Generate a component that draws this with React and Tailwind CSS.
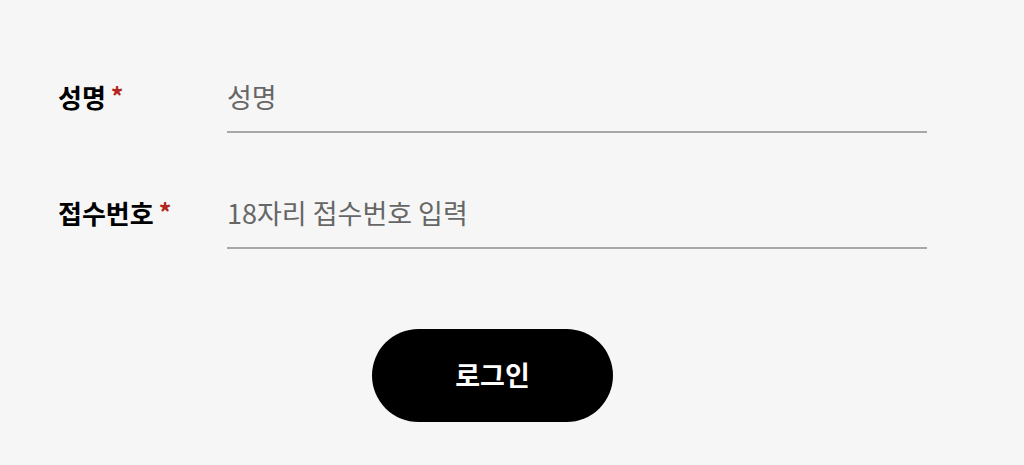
import { useState } from 'react';

const FONT = { fontFamily: '"Noto Sans CJK KR", "Noto Sans", sans-serif' };

const Field = ({ label, placeholder, value, onChange }) => (
  <div className="flex items-start">
    <label className="w-[169px] shrink-0 flex items-start text-[26px] font-bold leading-[36px] text-black">
      {label}
      <span className="ml-[5px] text-[25px] font-bold leading-[32px] text-[#b3261e]">*</span>
    </label>
    <div className="w-[700px] border-b-2 border-[#a8a8a8] pb-4">
      <input
        type="text"
        value={value}
        onChange={(e) => onChange(e.target.value)}
        placeholder={placeholder}
        className="block w-full bg-transparent text-[27px] leading-[36px] h-[36px] text-[#333] placeholder:text-[#666] outline-none"
        style={FONT}
      />
    </div>
  </div>
);

export default function App() {
  const [name, setName] = useState('');
  const [receipt, setReceipt] = useState('');

  return (
    <div className="min-h-[465px] bg-[#f6f6f6] pt-[79px] pl-[58px]" style={FONT}>
      <form className="w-[869px]" onSubmit={(e) => e.preventDefault()}>
        <div className="flex flex-col gap-[62px]">
          <Field label="성명" placeholder="성명" value={name} onChange={setName} />
          <Field label="접수번호" placeholder="18자리 접수번호 입력" value={receipt} onChange={setReceipt} />
        </div>
        <div className="mt-[80px] flex justify-center">
          <button
            type="submit"
            className="w-[241px] h-[93px] rounded-full bg-black text-white text-[27px] font-bold"
          >
            로그인
          </button>
        </div>
      </form>
    </div>
  );
}
